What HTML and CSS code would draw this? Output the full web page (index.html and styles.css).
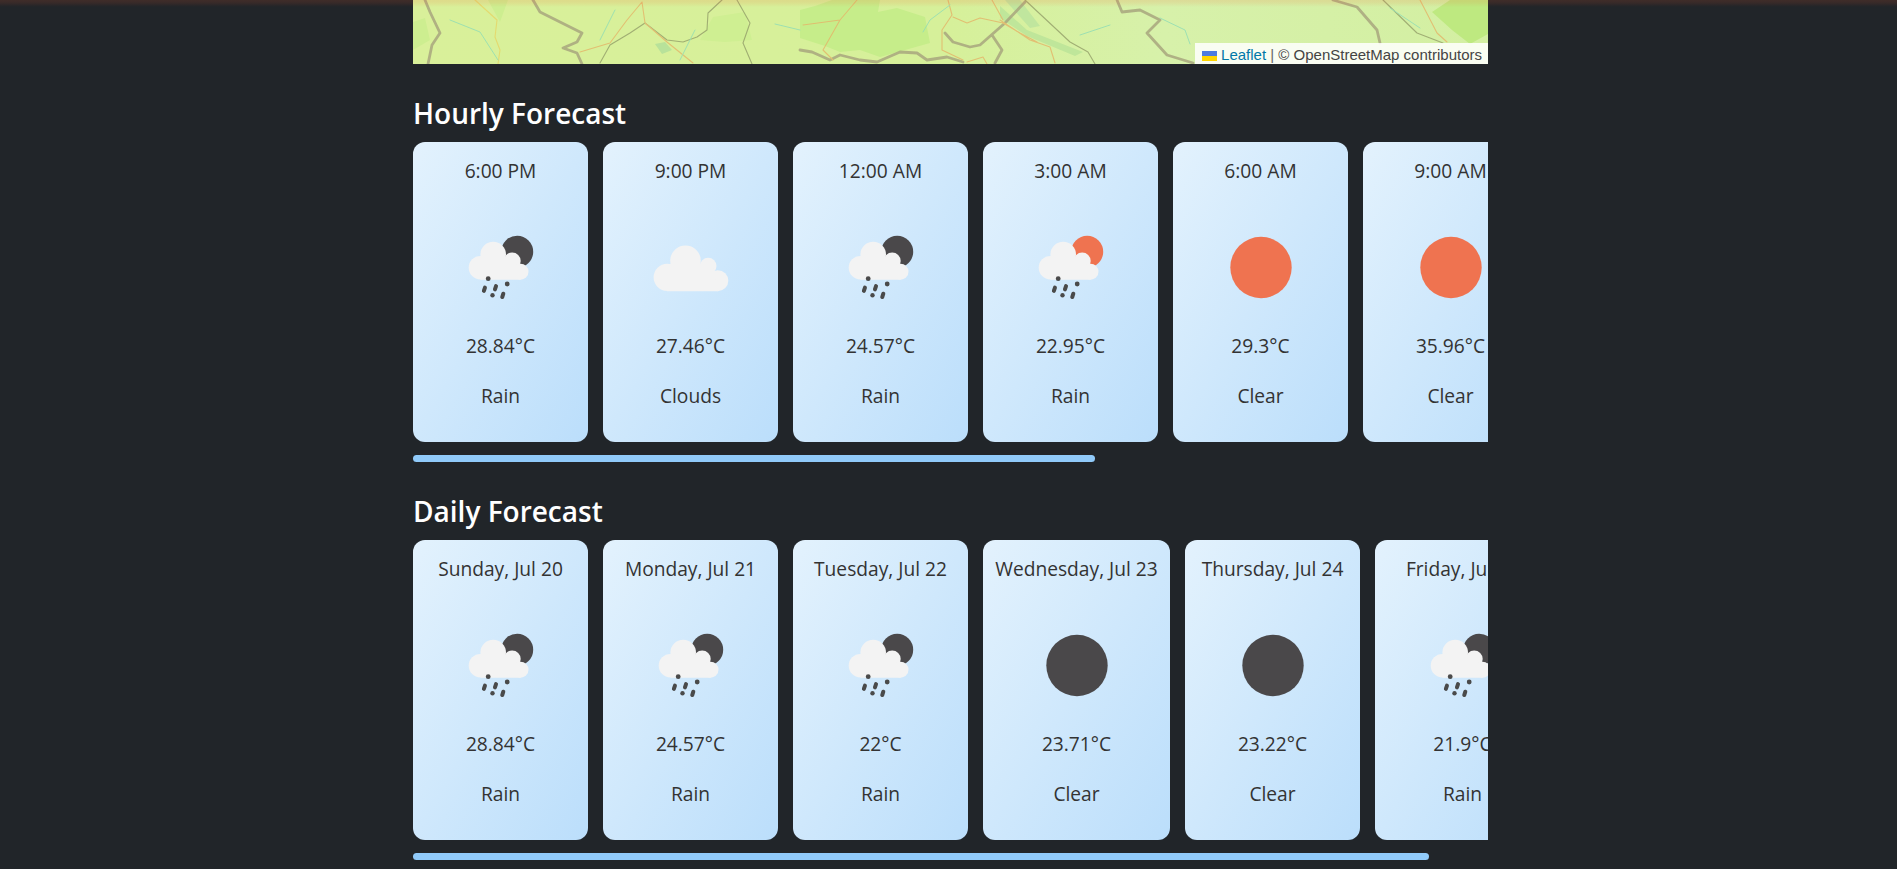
FILE: index.html
```html
<!DOCTYPE html>
<html lang="en">
<head>
<meta charset="utf-8">
<title>Weather</title>
<link rel="stylesheet" href="styles.css">
</head>
<body>
<svg class="defs" width="0" height="0">
  <defs>
    <symbol id="rain-cloud" viewBox="0 0 100 100">
      <g fill="#f3f3f3">
        <circle cx="29.500" cy="50.700" r="11.800"/>
        <circle cx="42.200" cy="37.500" r="12.800"/>
        <circle cx="61.200" cy="44" r="8.500"/>
        <circle cx="69.500" cy="54.700" r="8"/>
        <path d="M29.500 42H62L70 62.700H29.500Z"/>
      </g>
      <g fill="#4a4a4a">
        <circle cx="37.200" cy="61.700" r="2.400"/>
        <circle cx="56.200" cy="67" r="2.400"/>
        <circle cx="41.500" cy="78.300" r="2.200"/>
        <rect x="31.500" y="68.500" width="4" height="7.500" rx="2" transform="rotate(18 33.500 72)"/>
        <rect x="42.500" y="67" width="4" height="7.500" rx="2" transform="rotate(18 44.500 70.700)"/>
        <rect x="49.800" y="74.600" width="4" height="7.500" rx="2" transform="rotate(18 51.800 78.300)"/>
      </g>
    </symbol>
    <symbol id="cloud" viewBox="0 0 100 100">
      <g fill="#f3f3f3">
        <circle cx="26.200" cy="60.300" r="13.600"/>
        <circle cx="44.500" cy="43.700" r="15.300"/>
        <circle cx="67.200" cy="49" r="8.300"/>
        <circle cx="76.800" cy="63.700" r="10.500"/>
        <path d="M26 47H72L77 74.200H26Z"/>
      </g>
    </symbol>
    <symbol id="moon-small" viewBox="0 0 100 100"><circle cx="66.200" cy="34.700" r="16" fill="#4a484a"/></symbol>
    <symbol id="sun-small" viewBox="0 0 100 100"><circle cx="66.200" cy="34.700" r="16" fill="#ef7350"/></symbol>
    <symbol id="moon" viewBox="0 0 100 100"><circle cx="50" cy="50.500" r="30.700" fill="#4a484a"/></symbol>
    <symbol id="sun" viewBox="0 0 100 100"><circle cx="50" cy="50.500" r="30.700" fill="#ef7350"/></symbol>
  </defs>
</svg>
<div class="top-glow"></div>
<main class="page">
  <div class="map">
    <svg class="map-art" viewBox="413 0 1075 64" preserveAspectRatio="none">
      <defs>
        <linearGradient id="land" x1="0" x2="1" y1="0" y2="0">
          <stop offset="0" stop-color="#d9f09a"/>
          <stop offset=".5" stop-color="#d6f09a"/>
          <stop offset=".7" stop-color="#d7f1aa"/>
          <stop offset="1" stop-color="#d3efa2"/>
        </linearGradient>
      </defs>
      <rect x="413" y="0" width="1075" height="64" fill="url(#land)"/>
      <g class="soft">
        <path d="M800 10L815 6L832 0H880L878 12L897 8L925 17L930 43L905 50L880 57L860 50L840 52L825 46L800 38Z" fill="#c6ed8a"/>
        <path d="M1432 12L1450 0H1488V34L1470 44L1452 30Z" fill="#bee980"/>
        <path d="M713 17L745 12L752 40L725 42L700 40Z" fill="#cfef92"/>
        <path d="M488 0L508 0L500 22Z" fill="#cdee90"/>
        <path d="M413 22L425 18L430 40L413 50Z" fill="#cdee90"/>
        <path d="M655 44L665 42L672 50L662 54Z" fill="#b8e29a"/>
        <path d="M1000 6L1027 30L1083 52L1075 56L1027 36L1000 18Z" fill="#bfe69a"/>
        <path d="M1005 0H1020L1040 26L1030 28Z" fill="#c0e69e"/>
        <g class="lines" fill="none" stroke-linejoin="round" stroke-linecap="round">
          <path d="M425 0L430 12L440 33L432 45L428 64M533 0L540 12L560 22L582 33L577 42L563 48L577 53L582 64M800 50L812 52L830 60L840 55L860 60L877 62L900 52L917 53L927 60L947 57L963 62M945 33L953 42L970 47L980 45L1005 23L1025 2M992 35L1002 50L995 63M1117 0L1122 12L1140 10L1160 20L1147 33L1167 55L1193 63M1333 0L1357 7L1377 30L1380 43" stroke="#a8a67e" stroke-width="2.800"/>
          <path d="M645 23L667 40L683 42L697 37L707 30L708 13L722 0M645 23L630 33L610 45L600 63M737 0L750 23L743 43L752 64M1025 0L1070 42L1088 52L1095 64M1383 0L1417 33L1443 43" stroke="#97a36c" stroke-width="1.100"/>
          <path d="M642 2L627 20L610 43L580 52M642 2L645 23L667 42L693 63M857 0L840 20L823 50L833 60M803 25L840 20M948 0L952 15L942 30L942 50L963 60M953 17L967 23L980 18L1003 23L1020 33L1037 42M992 0L1003 20M967 62L983 57L987 64M1000 20L1030 40L1050 47L1055 63M1420 0L1437 33L1447 42" stroke="#e4b76b" stroke-width="1.100"/>
          <path d="M475 0L497 20L495 37L500 50L498 64" stroke="#e6d668" stroke-width="1.100"/>
          <path d="M450 20L480 32L498 60M600 40L615 10M680 60L695 30M950 5L930 20L923 32M1160 18L1185 30L1190 44M1080 35L1110 25M1390 8L1420 28M775 24L800 30" stroke="#93ddb5" stroke-width="1"/>
        </g>
      </g>
    </svg>
    <div class="attribution"><svg class="flag" viewBox="0 0 12 8"><rect width="12" height="4" fill="#4c7be1"/><rect y="4" width="12" height="4" fill="#ffd500"/></svg> <a class="leaflet">Leaflet</a> <span class="sep">|</span> © OpenStreetMap contributors</div>
  </div>

  <section class="forecast">
    <h2>Hourly Forecast</h2>
    <div class="strip">
      <article class="card"><p>6:00 PM</p><svg class="icon" viewBox="0 0 100 100"><use href="#moon-small"/><use href="#rain-cloud"/></svg><p>28.84°C</p><p>Rain</p></article>
      <article class="card"><p>9:00 PM</p><svg class="icon" viewBox="0 0 100 100"><use href="#cloud"/></svg><p>27.46°C</p><p>Clouds</p></article>
      <article class="card"><p>12:00 AM</p><svg class="icon" viewBox="0 0 100 100"><use href="#moon-small"/><use href="#rain-cloud"/></svg><p>24.57°C</p><p>Rain</p></article>
      <article class="card"><p>3:00 AM</p><svg class="icon" viewBox="0 0 100 100"><use href="#sun-small"/><use href="#rain-cloud"/></svg><p>22.95°C</p><p>Rain</p></article>
      <article class="card"><p>6:00 AM</p><svg class="icon" viewBox="0 0 100 100"><use href="#sun"/></svg><p>29.3°C</p><p>Clear</p></article>
      <article class="card"><p>9:00 AM</p><svg class="icon" viewBox="0 0 100 100"><use href="#sun"/></svg><p>35.96°C</p><p>Clear</p></article>
    </div>
    <div class="thumb hourly-thumb"></div>
  </section>

  <section class="forecast">
    <h2>Daily Forecast</h2>
    <div class="strip">
      <article class="card"><p>Sunday, Jul 20</p><svg class="icon" viewBox="0 0 100 100"><use href="#moon-small"/><use href="#rain-cloud"/></svg><p>28.84°C</p><p>Rain</p></article>
      <article class="card"><p>Monday, Jul 21</p><svg class="icon" viewBox="0 0 100 100"><use href="#moon-small"/><use href="#rain-cloud"/></svg><p>24.57°C</p><p>Rain</p></article>
      <article class="card"><p>Tuesday, Jul 22</p><svg class="icon" viewBox="0 0 100 100"><use href="#moon-small"/><use href="#rain-cloud"/></svg><p>22°C</p><p>Rain</p></article>
      <article class="card wide"><p>Wednesday, Jul 23</p><svg class="icon" viewBox="0 0 100 100"><use href="#moon"/></svg><p>23.71°C</p><p>Clear</p></article>
      <article class="card"><p>Thursday, Jul 24</p><svg class="icon" viewBox="0 0 100 100"><use href="#moon"/></svg><p>23.22°C</p><p>Clear</p></article>
      <article class="card"><p>Friday, Jul 25</p><svg class="icon" viewBox="0 0 100 100"><use href="#moon-small"/><use href="#rain-cloud"/></svg><p>21.9°C</p><p>Rain</p></article>
    </div>
    <div class="thumb daily-thumb"></div>
  </section>
</main>
</body>
</html>
```
FILE: styles.css
```css
html, body {
  margin: 0;
  height: 869px;
  overflow: hidden;
  background: #212529;
  font-family: "Open Sans", "Noto Sans", sans-serif;
}
body { padding-left: 4px; }
.defs { display: block; width: 0; height: 0; }
.top-glow {
  position: fixed;
  top: 0;
  left: 0;
  right: 0;
  height: 7px;
  background: linear-gradient(180deg, rgba(255, 90, 40, .14), rgba(255, 90, 40, .1) 40%, rgba(255, 90, 40, 0));
  pointer-events: none;
  z-index: 2;
}
.page {
  width: 1075px;
  margin: 0 auto;
}
.map {
  height: 64px;
  position: relative;
  overflow: hidden;
}
.map-art {
  display: block;
  width: 100%;
  height: 64px;
}
.soft { filter: blur(.7px); }
.lines { opacity: .85; }
.attribution {
  position: absolute;
  right: 0;
  bottom: 0;
  height: 21px;
  padding: 0 6px 0 7px;
  background: rgba(255, 255, 255, .85);
  font: 15px/23px "Liberation Sans", Arial, sans-serif;
  color: #444;
  white-space: nowrap;
}
.flag { width: 15px; height: 10px; vertical-align: -1px; }
.leaflet { color: #0078a8; }
.sep { color: #666; }
.forecast {
  display: flex;
  flex-direction: column;
  padding-top: 29px;
}
h2 {
  margin: 0 0 9px;
  font-size: 28px;
  line-height: 40px;
  font-weight: 600;
  color: #fff;
}
.strip {
  display: flex;
  gap: 15px;
  overflow: hidden;
}
.card {
  flex: 0 0 175px;
  box-sizing: border-box;
  height: 300px;
  padding: 16px 0 0;
  border-radius: 12px;
  background: linear-gradient(to bottom right, #e3f2fd, #bbdefb);
  color: #333;
  display: flex;
  flex-direction: column;
  align-items: center;
  font-size: 19.200px;
}
.card.wide { flex-basis: 187px; }
.card p {
  margin: 0;
  height: 26px;
  line-height: 26px;
  white-space: nowrap;
}
.card .icon {
  flex: none;
  width: 100px;
  height: 100px;
  margin: 33px 0 16px;
}
.card p:last-child { margin-top: 24px; }
.thumb {
  height: 7px;
  margin-top: 13px;
  border-radius: 4px;
  background: #90caf9;
}
.hourly-thumb { width: 682px; }
.daily-thumb { width: 1016px; }
```
